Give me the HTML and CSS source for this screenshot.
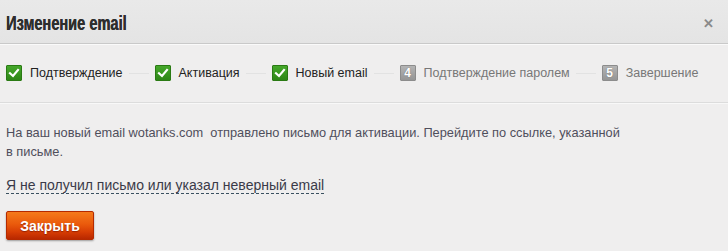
FILE: index.html
```html
<!DOCTYPE html>
<html lang="ru">
<head>
<meta charset="utf-8">
<link rel="stylesheet" href="styles.css">
</head>
<body>
<div class="dialog">
  <div class="header">
    <h1 class="title">Изменение email</h1>
    <span class="close">&#x2715;</span>
  </div>
  <div class="steps">
    <div class="step done"><span class="box check"><svg viewBox="0 0 16 16" width="16" height="16"><path d="M4 8.2 L7 11 L12 5" fill="none" stroke="#fff" stroke-width="2.2" stroke-linecap="square"/></svg></span><span class="label">Подтверждение</span></div>
    <span class="sep"></span>
    <div class="step done"><span class="box check"><svg viewBox="0 0 16 16" width="16" height="16"><path d="M4 8.2 L7 11 L12 5" fill="none" stroke="#fff" stroke-width="2.2" stroke-linecap="square"/></svg></span><span class="label">Активация</span></div>
    <span class="sep"></span>
    <div class="step done"><span class="box check"><svg viewBox="0 0 16 16" width="16" height="16"><path d="M4 8.2 L7 11 L12 5" fill="none" stroke="#fff" stroke-width="2.2" stroke-linecap="square"/></svg></span><span class="label">Новый email</span></div>
    <span class="sep"></span>
    <div class="step todo"><span class="box num">4</span><span class="label">Подтверждение паролем</span></div>
    <span class="sep"></span>
    <div class="step todo"><span class="box num">5</span><span class="label">Завершение</span></div>
  </div>
  <div class="content">
    <p class="message">На ваш новый email wotanks.com&nbsp; отправлено письмо для активации. Перейдите по ссылке, указанной в письме.</p>
    <p class="resend"><span class="dashed">Я не получил письмо или указал неверный email</span></p>
    <button class="btn">Закрыть</button>
  </div>
</div>
</body>
</html>
```
FILE: styles.css
```css
html, body {
  margin: 0;
  padding: 0;
}
body {
  background: #efeeee;
  font-family: "Liberation Sans", Arial, sans-serif;
  width: 728px;
  height: 251px;
  overflow: hidden;
}
.dialog {
  display: flex;
  flex-direction: column;
}
.header {
  height: 43px;
  background: linear-gradient(180deg, #e9e9e9 0%, #e4e4e4 100%);
  border-bottom: 1px solid #c9c9c9;
  box-shadow: 0 1px 0 #fafafa;
  display: flex;
  align-items: center;
  justify-content: space-between;
  padding: 0 14px 0 6px;
}
.title {
  margin: 0;
  padding-top: 3px;
  font-family: "Liberation Sans", Arial, sans-serif;
  font-weight: bold;
  font-size: 20px;
  color: #2e2e2e;
  transform: scaleX(0.73);
  transform-origin: left center;
  white-space: nowrap;
  text-shadow: 0.4px 0 0 #2e2e2e;
}
.close {
  font-size: 13px;
  font-weight: bold;
  color: #8a8a8a;
  padding-top: 3px;
}
.steps {
  display: flex;
  align-items: center;
  height: 58px;
  padding: 0 6px;
  border-bottom: 1px solid #dcdcdc;
  box-shadow: 0 1px 0 #f8f8f8;
}
.step {
  display: flex;
  align-items: center;
  gap: 8px;
  font-size: 12.5px;
}
.step.done .label { color: #222; }
.step.todo .label { color: #777; }
.box {
  width: 16px;
  height: 16px;
  display: flex;
  align-items: center;
  justify-content: center;
  border-radius: 1px;
  box-sizing: border-box;
}
.check {
  background: linear-gradient(180deg, #45a82a 0%, #2e8617 100%);
  border: 1px solid #2a7a14;
}
.check svg { display: block; margin: -1px; }
.num {
  background: linear-gradient(180deg, #b4b4b4 0%, #959595 100%);
  border: 1px solid #8c8c8c;
  color: #fff;
  font-size: 12px;
  font-weight: bold;
  text-shadow: 0 0 1px #666;
}
.sep {
  width: 20px;
  height: 1px;
  margin: 0 6px;
  background: #e2e2e2;
}
.content {
  padding: 20px 6px 0;
}
.message {
  margin: 0;
  width: 624px;
  font-size: 12.8px;
  line-height: 19px;
  color: #4f4f5c;
}
.resend {
  margin: 15px 0 0;
  font-size: 14px;
  line-height: 18px;
}
.dashed {
  color: #3a3a48;
  border-bottom: 1px dashed #3a5060;
}
.btn {
  margin-top: 17px;
  width: 88px;
  height: 29px;
  border: 1px solid #b52a00;
  border-radius: 2px;
  background: linear-gradient(180deg, #f57a1c 0%, #ea5a0c 45%, #d63c04 75%, #b82800 100%);
  box-shadow: 0 1px 2px rgba(0,0,0,0.35);
  color: #fff;
  font-family: "Liberation Sans", Arial, sans-serif;
  font-size: 14px;
  font-weight: bold;
  text-shadow: 0 1px 1px rgba(120,20,0,0.7);
  padding: 0;
  display: block;
}
```
